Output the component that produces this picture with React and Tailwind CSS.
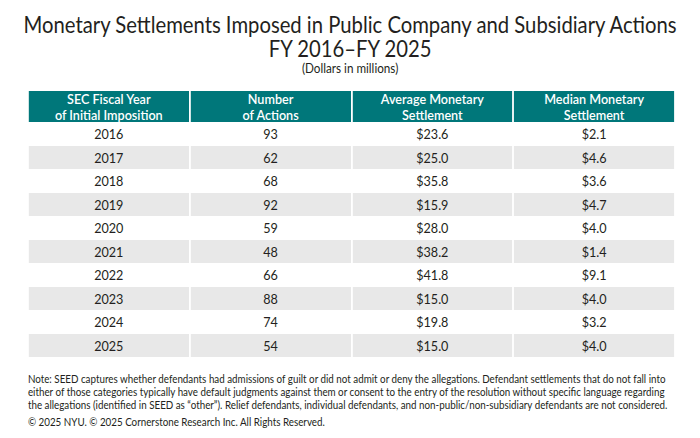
const rows = [
  ['2016', '93', '$23.6', '$2.1'],
  ['2017', '62', '$25.0', '$4.6'],
  ['2018', '68', '$35.8', '$3.6'],
  ['2019', '92', '$15.9', '$4.7'],
  ['2020', '59', '$28.0', '$4.0'],
  ['2021', '48', '$38.2', '$1.4'],
  ['2022', '66', '$41.8', '$9.1'],
  ['2023', '88', '$15.0', '$4.0'],
  ['2024', '74', '$19.8', '$3.2'],
  ['2025', '54', '$15.0', '$4.0'],
]

const headers = [
  ['SEC Fiscal Year', 'of Initial Imposition'],
  ['Number', 'of Actions'],
  ['Average Monetary', 'Settlement'],
  ['Median Monetary', 'Settlement'],
]

export default function App() {
  return (
    <div className="w-[700px] h-[438px] bg-white text-[#231f20] overflow-hidden" style={{ fontFamily: 'Lato, "Liberation Sans", sans-serif' }}>
      {/* the source chart is set in a narrow face, so the page is squeezed horizontally */}
      <div className="w-[778px] origin-top-left scale-x-[0.9]">
        {/* Title */}
        <div className="pt-[12px] text-center">
          <h1 className="text-[22.5px] leading-[25px]">Monetary Settlements Imposed in Public Company and Subsidiary Actions</h1>
          <h2 className="text-[22.5px] leading-[24px]">FY 2016–FY 2025</h2>
          <p className="text-[13px] leading-[14px]">(Dollars in millions)</p>
        </div>

        {/* Table */}
        <div className="mt-[16px] ml-[32px] w-[717px]">
          <div className="grid grid-cols-4 gap-x-[2px] h-[31px]">
            {headers.map((h) => (
              <div key={h[0]} className="bg-[#00777a] text-white text-[14px] leading-[15.5px] font-semibold flex flex-col items-center justify-center">
                <span>{h[0]}</span>
                <span>{h[1]}</span>
              </div>
            ))}
          </div>
          {rows.map((r, i) => (
            <div key={r[0]} className="grid grid-cols-4 gap-x-[2px] h-[23.5px]">
              {r.map((c, j) => (
                <div key={j} className={`${i % 2 ? 'bg-[#e8e8e8]' : 'bg-white'} text-[14px] flex items-center justify-center`}>
                  {c}
                </div>
              ))}
            </div>
          ))}
        </div>

        {/* Notes */}
        <div className="mt-[15px] ml-[31px] w-[722px] text-[10.9px] leading-[13px]">
          <p>
            Note: SEED captures whether defendants had admissions of guilt or did not admit or deny the allegations. Defendant settlements that do not fall into either of those categories typically have default judgments against them or consent to the entry of the resolution without specific language regarding the allegations (identified in SEED as “other”). Relief defendants, individual defendants, and non-public/non-subsidiary defendants are not considered.
          </p>
          <p className="mt-[4px]">© 2025 NYU. © 2025 Cornerstone Research Inc. All Rights Reserved.</p>
        </div>
      </div>
    </div>
  )
}
